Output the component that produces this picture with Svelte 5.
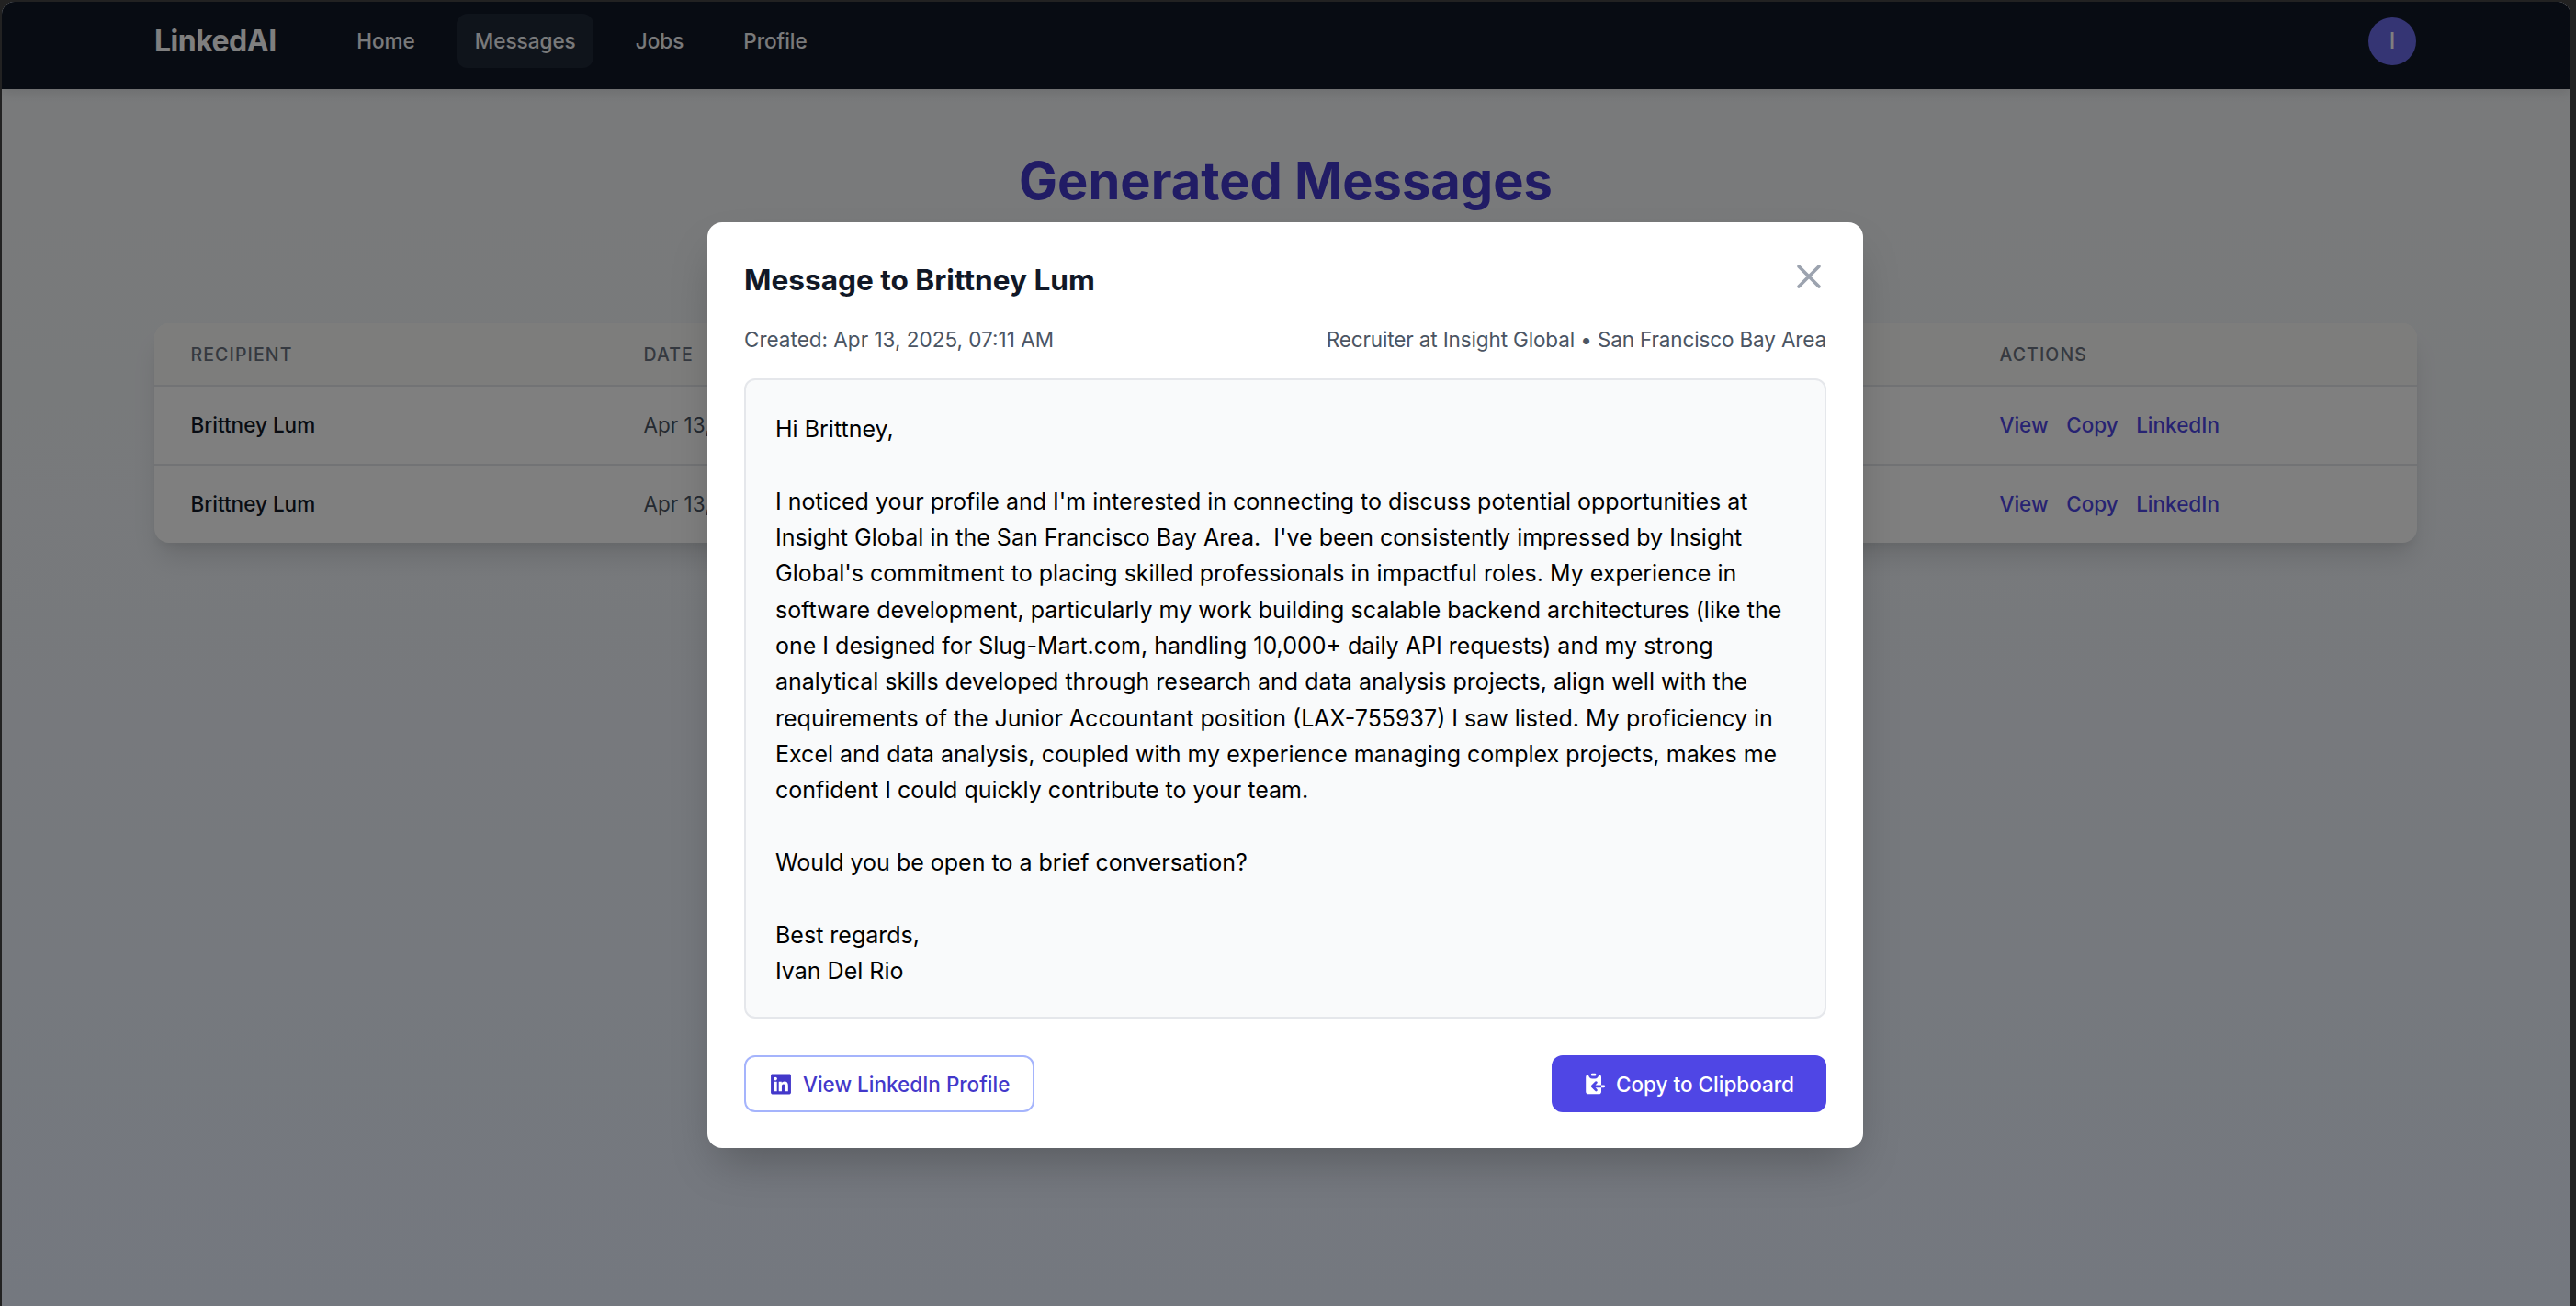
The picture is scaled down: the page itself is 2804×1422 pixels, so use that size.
<script>
	const navLinks = [
		{ label: 'Home', active: false },
		{ label: 'Messages', active: true },
		{ label: 'Jobs', active: false },
		{ label: 'Profile', active: false }
	];
	const rows = [
		{ name: 'Brittney Lum', date: 'Apr 13, 2025' },
		{ name: 'Brittney Lum', date: 'Apr 13, 2025' }
	];
	const message = `Hi Brittney,

I noticed your profile and I'm interested in connecting to discuss potential opportunities at Insight Global in the San Francisco Bay Area.  I've been consistently impressed by Insight Global's commitment to placing skilled professionals in impactful roles. My experience in software development, particularly my work building scalable backend architectures (like the one I designed for Slug-Mart.com, handling 10,000+ daily API requests) and my strong analytical skills developed through research and data analysis projects, align well with the requirements of the Junior Accountant position (LAX-755937) I saw listed. My proficiency in Excel and data analysis, coupled with my experience managing complex projects, makes me confident I could quickly contribute to your team.

Would you be open to a brief conversation?

Best regards,
Ivan Del Rio`;
</script>

<div class="frame">
	<div class="page">
		<nav class="navbar">
			<div class="nav-left">
				<span class="logo">LinkedAI</span>
				<div class="nav-links">
					{#each navLinks as link}
						<span class="nav-link" class:active={link.active}>{link.label}</span>
					{/each}
				</div>
			</div>
			<div class="avatar">I</div>
		</nav>

		<main class="content">
			<h1>Generated Messages</h1>
			<div class="table">
				<div class="row head">
					<span>Recipient</span>
					<span>Date</span>
					<span>Actions</span>
				</div>
				{#each rows as row}
					<div class="row">
						<span class="name">{row.name}</span>
						<span class="date">{row.date}</span>
						<span class="actions">
							<span>View</span>
							<span>Copy</span>
							<span>LinkedIn</span>
						</span>
					</div>
				{/each}
			</div>
		</main>

		<div class="overlay">
			<div class="modal">
				<div class="modal-head">
					<h2>Message to Brittney Lum</h2>
					<button class="close" aria-label="Close">
						<svg viewBox="0 0 24 24" width="44" height="44" fill="none" stroke="currentColor" stroke-width="2" stroke-linecap="round" stroke-linejoin="round">
							<path d="M6 18L18 6M6 6l12 12" />
						</svg>
					</button>
				</div>
				<div class="meta">
					<span>Created: Apr 13, 2025, 07:11 AM</span>
					<span class="role">Recruiter at Insight Global • San Francisco Bay Area</span>
				</div>
				<div class="message">{message}</div>
				<div class="modal-foot">
					<button class="btn outline">
						<svg viewBox="0 0 448 512" width="22" height="25" fill="currentColor">
							<path d="M416 32H31.9C14.3 32 0 46.5 0 64.3v383.4C0 465.5 14.3 480 31.9 480H416c17.6 0 32-14.5 32-32.3V64.3c0-17.8-14.4-32.3-32-32.3zM135.4 416H69V202.2h66.5V416zm-33.2-243c-21.3 0-38.5-17.3-38.5-38.5S80.9 96 102.2 96c21.2 0 38.5 17.3 38.5 38.5 0 21.3-17.2 38.5-38.5 38.5zm282.1 243h-66.4V312c0-24.8-.5-56.7-34.5-56.7-34.6 0-39.9 27-39.9 54.9V416h-66.4V202.2h63.7v29.2h.9c8.9-16.8 30.6-34.5 62.9-34.5 67.2 0 79.7 44.3 79.7 101.9V416z" />
						</svg>
						View LinkedIn Profile
					</button>
					<button class="btn primary">
						<svg viewBox="0 0 20 20" width="28" height="28" fill="currentColor">
							<path d="M8 2a1 1 0 000 2h2a1 1 0 100-2H8z" />
							<path d="M3 5a2 2 0 012-2 3 3 0 003 3h2a3 3 0 003-3 2 2 0 012 2v6h-4.586l1.293-1.293a1 1 0 00-1.414-1.414l-3 3a1 1 0 000 1.414l3 3a1 1 0 001.414-1.414L10.414 13H15v3a2 2 0 01-2 2H5a2 2 0 01-2-2V5zM15 11h2a1 1 0 110 2h-2v-2z" />
						</svg>
						Copy to Clipboard
					</button>
				</div>
			</div>
		</div>
	</div>
</div>

<style>
	:global(body) {
		background: #222222;
	}

	.frame {
		box-sizing: border-box;
		height: 1422px;
		padding: 2px 6px 0 2px;
		background: #222222;
		font-family: Inter, 'Liberation Sans', sans-serif;
	}

	.page {
		position: relative;
		height: 100%;
		overflow: hidden;
		border-radius: 14px 14px 0 0;
		background: linear-gradient(180deg, #f3f5f7 0%, #f1f4f7 30%, #e9f1ff 100%);
	}

	.navbar {
		box-sizing: border-box;
		height: 95px;
		padding: 0 168px 10px 166px;
		display: flex;
		align-items: center;
		justify-content: space-between;
		background: #111827;
		box-shadow: 0 4px 12px rgba(0, 0, 0, 0.1);
	}

	.nav-left {
		display: flex;
		align-items: center;
	}

	.logo {
		color: #ffffff;
		font-size: 32px;
		font-weight: 700;
		letter-spacing: -0.5px;
		margin-right: 68px;
	}

	.nav-links {
		display: flex;
		gap: 26px;
	}

	.nav-link {
		padding: 15px 19.5px;
		line-height: 29px;
		border-radius: 12px;
		color: #f3f4f6;
		font-size: 22.5px;
		font-weight: 500;
	}

	.nav-link.active {
		background: #1f2937;
	}

	.avatar {
		width: 52px;
		height: 52px;
		border-radius: 50%;
		display: flex;
		align-items: center;
		justify-content: center;
		background: #6a6ae8;
		color: #ffffff;
		font-size: 24px;
		font-weight: 500;
	}

	.content {
		padding: 0 167px 0 166px;
	}

	h1 {
		margin: 64px 0 0;
		text-align: center;
		color: #4338ca;
		font-size: 56px;
		line-height: 72px;
		font-weight: 700;
	}

	.table {
		margin-top: 119px;
		border-radius: 16px;
		overflow: hidden;
		background: #ffffff;
		box-shadow: 0 20px 30px -6px rgba(0, 0, 0, 0.12), 0 8px 12px -4px rgba(0, 0, 0, 0.06);
	}

	.row {
		display: grid;
		grid-template-columns: 493px 1476px 1fr;
		align-items: center;
		height: 86px;
		padding: 0 40px 1px 39.5px;
		border-top: 2px solid #e5e7eb;
		box-sizing: border-box;
		font-size: 22.5px;
		color: #4b5563;
	}

	.row.head {
		height: 67px;
		padding-bottom: 0;
		border-top: none;
		background: #fafbf8;
		color: #6b7280;
		font-size: 19.5px;
		font-weight: 500;
		letter-spacing: 1.1px;
		text-transform: uppercase;
	}

	.name {
		color: #111827;
		font-weight: 500;
	}

	.actions {
		display: flex;
		gap: 19.5px;
		color: #4f46e5;
		font-weight: 500;
	}

	.overlay {
		position: absolute;
		inset: 0;
		display: flex;
		justify-content: center;
		align-items: flex-start;
		padding: 240px 2px 0 0;
		background: rgba(0, 0, 0, 0.5);
	}

	.modal {
		box-sizing: border-box;
		width: 1258px;
		height: 1008px;
		padding: 40px;
		border-radius: 16px;
		background: #ffffff;
		box-shadow: 0 25px 50px -12px rgba(0, 0, 0, 0.25);
	}

	.modal-head {
		display: flex;
		align-items: center;
		justify-content: space-between;
		height: 44px;
	}

	h2 {
		margin: 0;
		color: #111827;
		font-size: 31.6px;
		font-weight: 650;
	}

	.close {
		margin: -6px -3px 0 0;
		padding: 0;
		border: none;
		background: none;
		color: #9ca3af;
		display: flex;
	}

	.meta {
		display: flex;
		justify-content: space-between;
		align-items: center;
		height: 36px;
		margin-top: 25px;
		color: #4b5563;
		font-size: 22.5px;
	}

	.role {
		letter-spacing: -0.14px;
	}

	.message {
		box-sizing: border-box;
		height: 697px;
		margin-top: 25px;
		padding: 34px 32px 0;
		border: 2px solid #e5e7eb;
		border-radius: 12px;
		background: #f9fafb;
		color: #000000;
		font-size: 25px;
		line-height: 39.35px;
		white-space: pre-wrap;
	}

	.modal-foot {
		display: flex;
		justify-content: space-between;
		margin-top: 40px;
	}

	.btn {
		box-sizing: border-box;
		height: 62px;
		display: flex;
		align-items: center;
		border-radius: 12px;
		font-family: inherit;
		font-size: 22.5px;
		font-weight: 500;
	}

	.btn.outline {
		width: 316px;
		padding: 0 0 0 27px;
		gap: 13px;
		border: 2px solid #a5b4fc;
		background: #ffffff;
		color: #4338ca;
	}

	.btn.primary {
		width: 299px;
		padding: 0 0 0 33px;
		gap: 9px;
		border: none;
		background: #4f46e5;
		color: #ffffff;
	}
</style>
